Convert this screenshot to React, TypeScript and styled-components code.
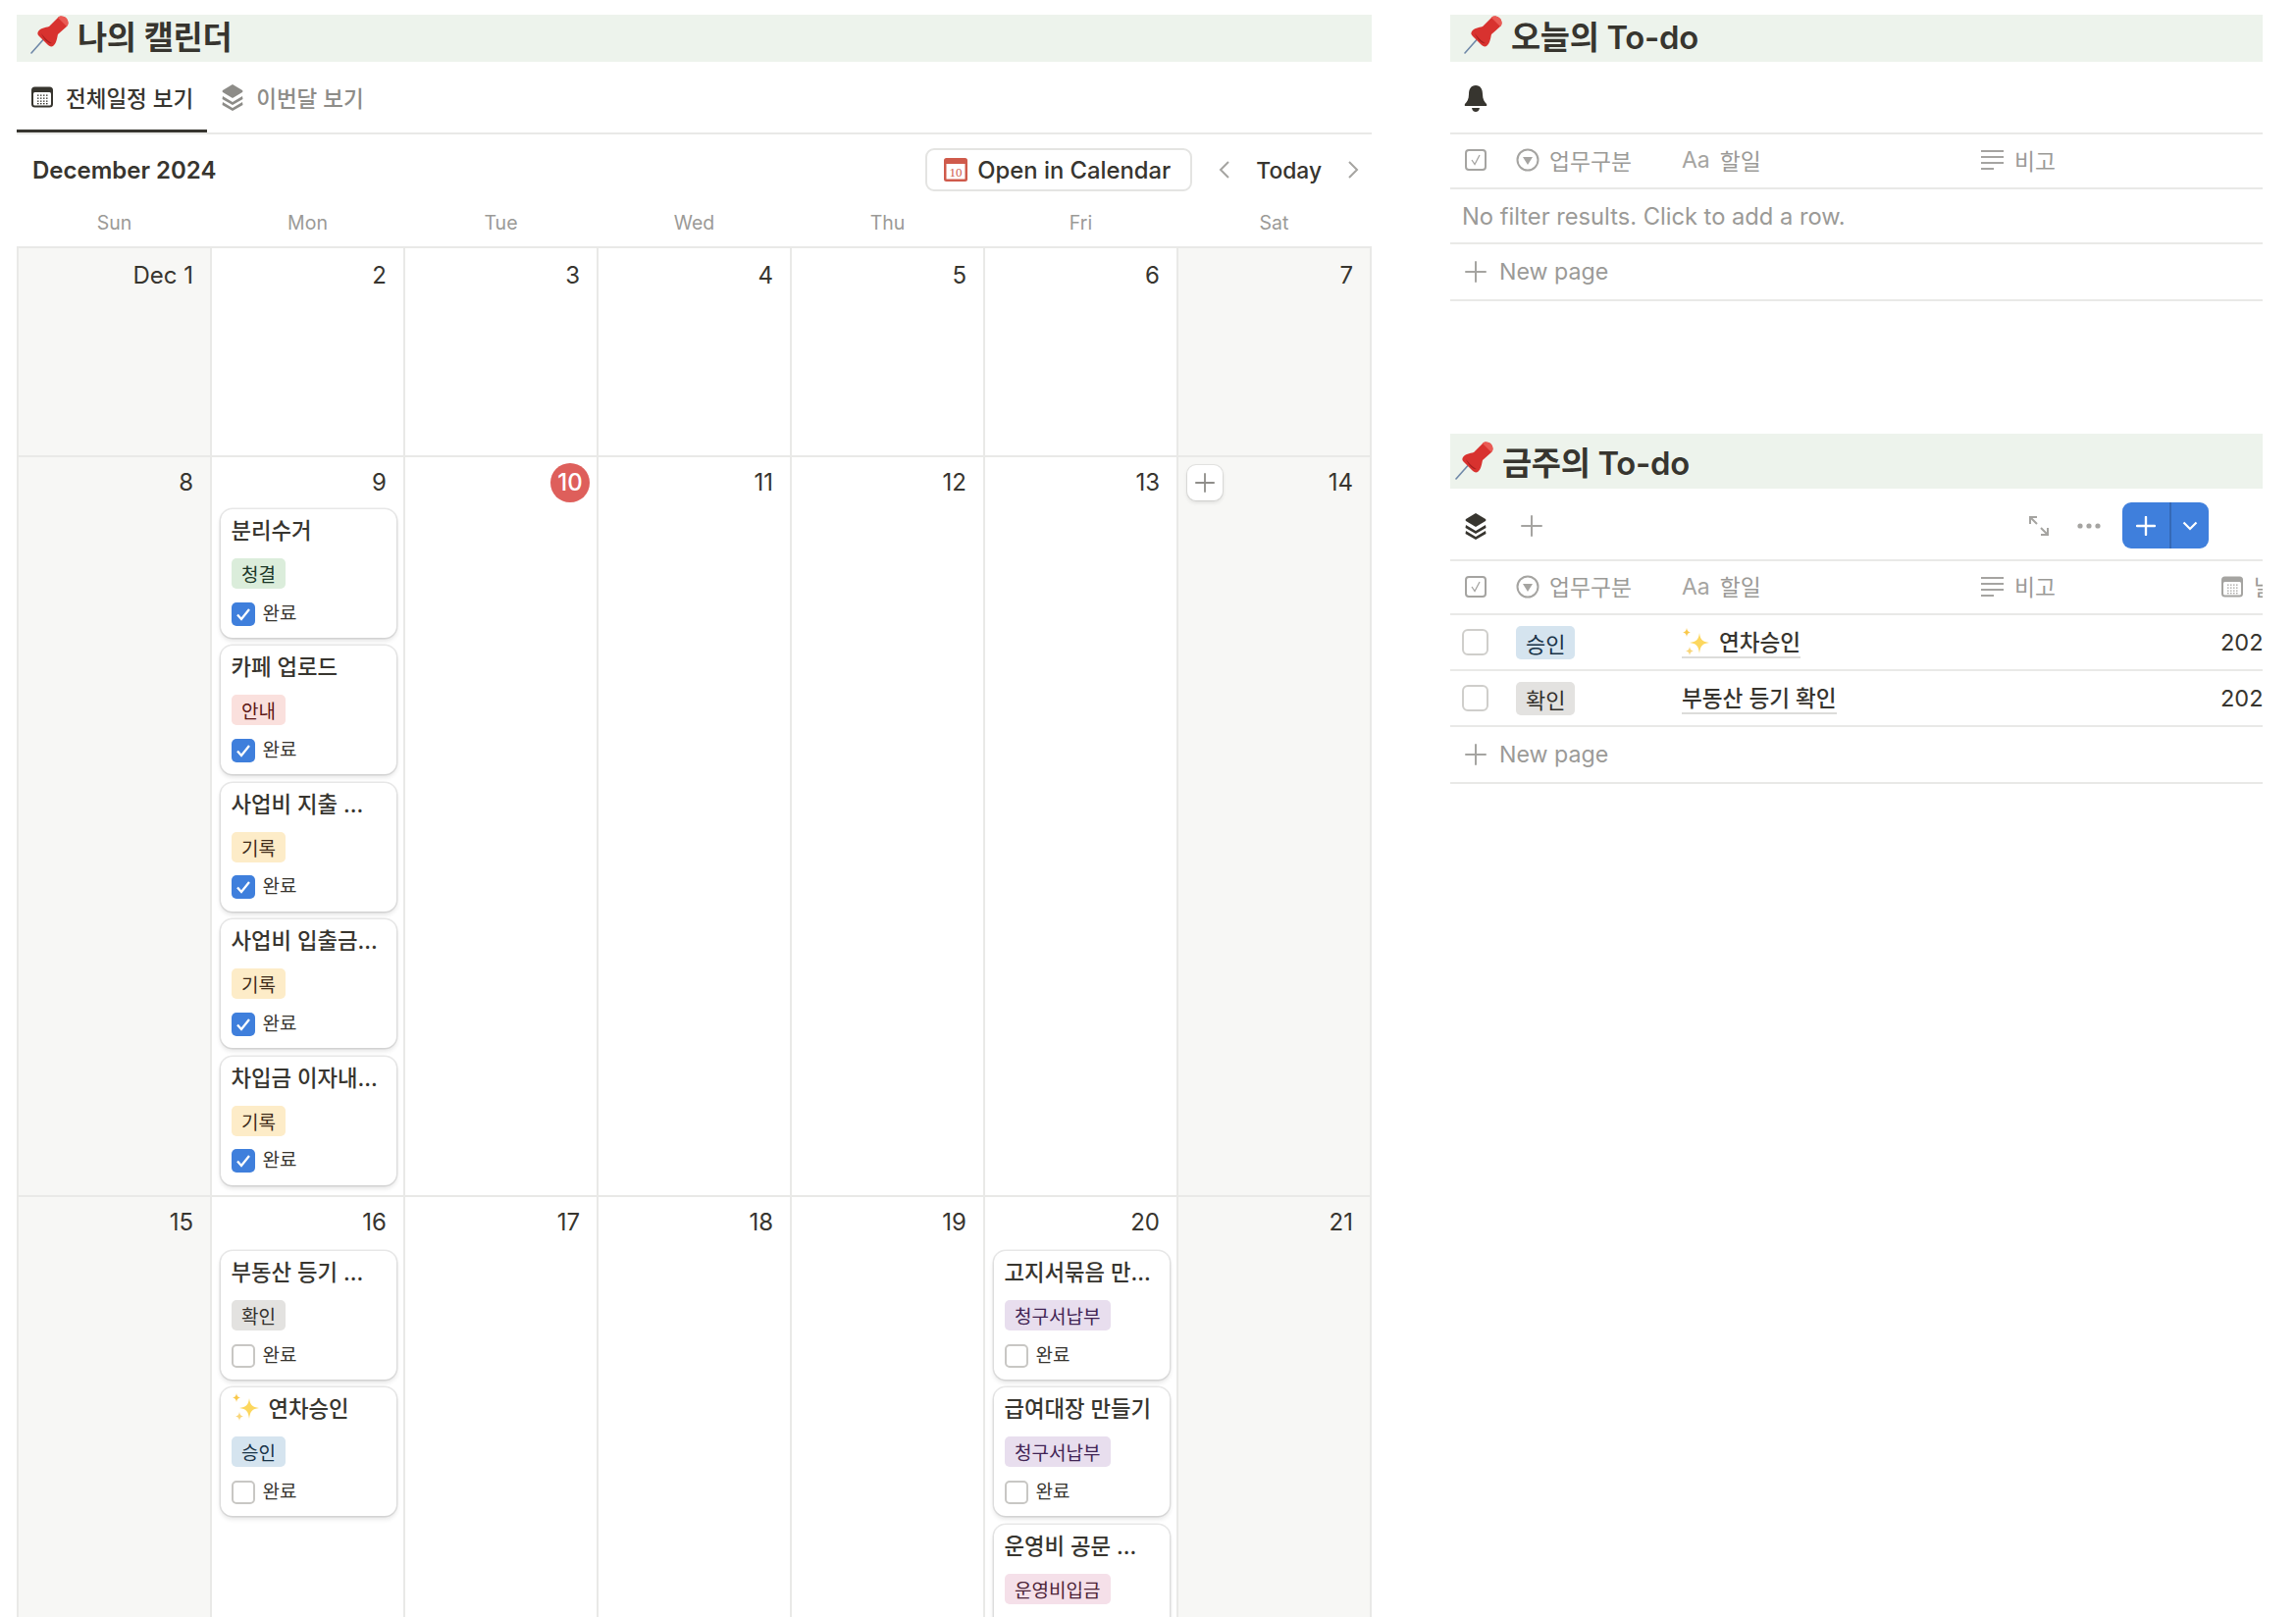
import React from "react";
import styled, { createGlobalStyle } from "styled-components";

const GlobalStyle = createGlobalStyle`
  html, body {
    margin: 0;
    padding: 0;
    background: #fff;
    color: #37352f;
    font-family: Inter, "Noto Sans CJK KR", sans-serif;
    -webkit-font-smoothing: antialiased;
  }
  * {
    box-sizing: border-box;
  }
`;

const Page = styled.div`
  width: 2340px;
  height: 1648px;
  overflow: hidden;
  display: flex;
  gap: 80px;
  padding: 15px 0 0 17px;
`;

const LeftColumn = styled.section`
  width: 1381px;
  flex: none;
`;

const RightColumn = styled.section`
  width: 828px;
  flex: none;
`;

const Heading = styled.h2<{ $height?: number; $pinLeft?: number; $lift?: number }>`
  margin: 0;
  height: ${(p) => p.$height ?? 48}px;
  background: #edf3ec;
  display: flex;
  align-items: center;
  gap: 8px;
  padding-left: ${(p) => p.$pinLeft ?? 14}px;
  padding-bottom: ${(p) => p.$lift ?? 0}px;
  font-size: 32.8px;
  font-weight: 600;
  letter-spacing: -0.3px;
  color: #37352f;
`;

const Tabs = styled.div`
  height: 74px;
  display: flex;
  border-bottom: 2px solid #e9e9e7;
`;

const Tab = styled.div<{ $active?: boolean }>`
  height: 72px;
  display: flex;
  align-items: center;
  gap: 12px;
  padding: 2px 14px 0;
  font-size: 22.5px;
  font-weight: 500;
  color: ${(p) => (p.$active ? "#37352f" : "#8d8c88")};
  border-bottom: 3px solid ${(p) => (p.$active ? "#37352f" : "transparent")};
  margin-bottom: -1px;
`;

const MonthBar = styled.div`
  height: 68px;
  display: flex;
  align-items: center;
  padding: 4px 13px 0 16px;
`;

const MonthTitle = styled.div`
  font-size: 24px;
  font-weight: 600;
  flex: 1;
`;

const OpenButton = styled.div`
  height: 44px;
  width: 272px;
  display: flex;
  align-items: center;
  gap: 10px;
  padding-left: 17px;
  border: 2px solid #e4e4e2;
  border-radius: 9px;
  font-size: 23.8px;
  font-weight: 500;
`;

const TodayNav = styled.div`
  display: flex;
  align-items: center;
  margin-left: 27px;
  font-size: 22.8px;
  font-weight: 500;
  gap: 26px;
`;

const WeekHeader = styled.div`
  height: 46px;
  margin-left: 1px;
  padding-bottom: 3px;
  display: grid;
  grid-template-columns: repeat(7, 197px);
`;

const WeekDay = styled.div`
  display: flex;
  align-items: center;
  justify-content: center;
  font-size: 19.5px;
  color: #9b9a97;
`;

const WeekRow = styled.div<{ $height: number }>`
  height: ${(p) => p.$height}px;
  width: 1381px;
  display: grid;
  grid-template-columns: repeat(7, 197px);
  border-top: 2px solid #e9e9e7;
`;

const DayCell = styled.div<{ $weekend?: boolean; $last?: boolean; $top: number }>`
  position: relative;
  height: 100%;
  padding: ${(p) => p.$top}px 6px 0 9px;
  background: ${(p) => (p.$weekend ? "#f7f7f5" : "#fff")};
  border-left: 2px solid #e9e9e7;
  box-shadow: ${(p) => (p.$last ? "2px 0 0 #e9e9e7" : "none")};
  overflow: hidden;
`;

const DayNumber = styled.div<{ $today?: boolean; $top: number }>`
  position: absolute;
  top: ${(p) => p.$top}px;
  right: ${(p) => (p.$today ? "7px" : "17px")};
  height: 40px;
  min-width: 40px;
  display: flex;
  align-items: center;
  justify-content: flex-end;
  font-size: 24px;
  color: #37352f;
  ${(p) =>
    p.$today &&
    `
    justify-content: center;
    border-radius: 50%;
    background: #de5f5b;
    color: #fff;
    font-weight: 500;
  `}
`;

const HoverAdd = styled.div`
  position: absolute;
  left: 9px;
  top: 8px;
  width: 36px;
  height: 36px;
  border-radius: 9px;
  background: #fff;
  box-shadow: 0 0 0 1px rgba(15, 15, 15, 0.08), 0 2px 4px rgba(15, 15, 15, 0.12);
  display: flex;
  align-items: center;
  justify-content: center;
`;

const Card = styled.div`
  width: 179px;
  height: 131px;
  margin-bottom: 8.4px;
  padding: 0 10.5px;
  background: #fff;
  border-radius: 12px;
  box-shadow: 0 0 0 1.5px rgba(15, 15, 15, 0.09), 0 3px 5px rgba(15, 15, 15, 0.12);
  display: flex;
  flex-direction: column;
  align-items: flex-start;
`;

const CardTitle = styled.div`
  height: 40px;
  display: flex;
  align-items: center;
  gap: 8px;
  font-size: 22.3px;
  font-weight: 500;
  white-space: nowrap;
  color: #37352f;
`;

const Tag = styled.span<{ $bg: string; $fg: string }>`
  display: inline-flex;
  align-items: center;
  height: 31px;
  margin-top: 10px;
  padding: 0 10.5px;
  border-radius: 5px;
  background: ${(p) => p.$bg};
  color: ${(p) => p.$fg};
  font-size: 19px;
  white-space: nowrap;
`;

const DoneRow = styled.div`
  display: flex;
  align-items: center;
  gap: 8px;
  margin-top: 13.5px;
  font-size: 19px;
  line-height: 24px;
  color: #37352f;
`;

const Check = styled.span<{ $checked?: boolean }>`
  width: 24px;
  height: 24px;
  flex: none;
  border-radius: 5px;
  background: ${(p) => (p.$checked ? "#3f7fdc" : "#fff")};
  border: ${(p) => (p.$checked ? "none" : "2px solid #c8c7c4")};
  display: flex;
  align-items: center;
  justify-content: center;
`;

const Toolbar = styled.div<{ $height: number }>`
  height: ${(p) => p.$height}px;
  display: flex;
  align-items: center;
  padding: 3px 0 0 14px;
  border-bottom: 2px solid #e9e9e7;
`;

const ToolbarRight = styled.div`
  margin-left: auto;
  margin-right: 55px;
  display: flex;
  align-items: center;
`;

const ToolbarSpacer = styled.span<{ $width: number }>`
  width: ${(p) => p.$width}px;
`;

const SplitButton = styled.div`
  width: 88px;
  height: 47px;
  margin-left: 22px;
  border-radius: 9px;
  background: #3f7fdc;
  display: grid;
  grid-template-columns: 48px 40px;
`;

const SplitPart = styled.div<{ $divided?: boolean }>`
  display: flex;
  align-items: center;
  justify-content: center;
  border-left: ${(p) => (p.$divided ? "2px solid #3569b6" : "none")};
`;

const TableClip = styled.div`
  width: 828px;
  overflow: hidden;
`;

const TableRow = styled.div<{ $height?: number }>`
  height: ${(p) => p.$height ?? 57}px;
  width: 1000px;
  display: grid;
  grid-template-columns: 56px 180px 304px 245px 215px;
  align-items: center;
  border-bottom: 2px solid #e9e9e7;
`;

const FullRow = styled.div<{ $height?: number; $pad: number; $size: number }>`
  height: ${(p) => p.$height ?? 56}px;
  width: 828px;
  display: flex;
  align-items: center;
  gap: 13px;
  border-bottom: 2px solid #e9e9e7;
  padding-left: ${(p) => p.$pad}px;
  font-size: ${(p) => p.$size}px;
  color: #9b9a97;
`;

const HeadCell = styled.div<{ $pad?: number }>`
  display: flex;
  align-items: center;
  gap: 10px;
  padding: 0 0 2px ${(p) => p.$pad ?? 0}px;
  font-size: 22.8px;
  color: #9b9a97;
  white-space: nowrap;
`;

const BodyCell = styled.div<{ $pad?: number }>`
  display: flex;
  align-items: center;
  padding-left: ${(p) => p.$pad ?? 0}px;
  font-size: 23.5px;
  color: #37352f;
  white-space: nowrap;
`;

const RowCheck = styled.span`
  width: 27px;
  height: 27px;
  margin-left: 12px;
  border: 2px solid #cfcecb;
  border-radius: 6px;
`;

const RowTag = styled.span<{ $bg: string; $fg: string }>`
  height: 34px;
  padding: 0 10px;
  display: inline-flex;
  align-items: center;
  border-radius: 5px;
  background: ${(p) => p.$bg};
  color: ${(p) => p.$fg};
  font-size: 22px;
`;

const RowTitle = styled.span`
  display: inline-flex;
  align-items: center;
  gap: 8px;
  height: 33px;
  font-size: 22.6px;
  font-weight: 500;
  border-bottom: 2px solid #dcdcda;
  white-space: nowrap;
`;

const SectionGap = styled.div`
  height: 135px;
`;

const Pin = () => (
  <svg width="40" height="40" viewBox="0 0 40 40">
    <path d="M1 39 L17 21" stroke="#6f88a8" strokeWidth="1.6" strokeLinecap="round" />
    <path
      d="M8 17 C10 14 15 13 19 12 L28 3 C30 1 34 1 37 4 C39 7 39 10 37 12 L28 20 C27 25 26 30 23 32 C21 33 19 32 17 30 L9 22 C7 20 7 19 8 17 Z"
      fill="#d8322f"
    />
    <path d="M28 3 C30 1 34 1 37 4 C39 7 39 10 37 12 L33 8 Z" fill="#ea5a54" />
    <path d="M11 19 C14 23 19 28 22 29 C19 30 14 26 11 19 Z" fill="#a71f1f" />
  </svg>
);

const Sparkle = ({ size = 30 }: { size?: number }) => (
  <svg width={size} height={size} viewBox="0 0 30 30">
    <path d="M18 6 C19 13 21 15 28 16 C21 17 19 19 18 27 C17 19 15 17 8 16 C15 15 17 13 18 6 Z" fill="#fcd75e" />
    <path d="M5 1 C5.5 4 6.5 5 9 5.5 C6.5 6 5.5 7 5 10 C4.5 7 3.5 6 1 5.5 C3.5 5 4.5 4 5 1 Z" fill="#f9c84a" />
    <path d="M8 20 C8.5 23 9.5 24 12 24.5 C9.5 25 8.5 26 8 29 C7.5 26 6.5 25 4 24.5 C6.5 24 7.5 23 8 20 Z" fill="#f9d67a" />
  </svg>
);

const CalendarIcon = ({ color = "#37352f", size = 24 }: { color?: string; size?: number }) => (
  <svg width={size} height={size} viewBox="0 0 24 24">
    <rect x="1" y="1.5" width="22" height="21" rx="3.5" fill={color} />
    <rect x="3" y="7" width="18" height="13.5" rx="1.5" fill="#fff" />
    {[9.5, 12.5, 15.5, 18].map((y) =>
      [7, 10, 13, 16].map((x) => <rect key={`${x}-${y}`} x={x} y={y} width="1.5" height="1.3" fill={color} />)
    )}
  </svg>
);

const LayersIcon = ({ color = "#37352f" }: { color?: string }) => (
  <svg width="24" height="28" viewBox="0 0 24 28">
    <path d="M12 1 L22 7 Q23 8 22 9 L12 15 L2 9 Q1 8 2 7 Z" fill={color} />
    <path d="M2 13 L12 19 L22 13 L22.5 16 L12 22 L1.5 16 Z" fill={color} />
    <path d="M2 19 L12 25 L22 19 L22.5 22 L12 28 L1.5 22 Z" fill={color} />
  </svg>
);

const BellIcon = () => (
  <svg width="24" height="27" viewBox="0 0 24 27">
    <path
      d="M12 0 C7 0 5 4 5 9 C5 14 3 17 1 19 Q0 21 2 21 L22 21 Q24 21 23 19 C21 17 19 14 19 9 C19 4 17 0 12 0 Z"
      fill="#37352f"
    />
    <path d="M8 23 L16 23 C15.5 26 13.5 27 12 27 C10.5 27 8.5 26 8 23 Z" fill="#37352f" />
  </svg>
);

const PlusIcon = ({ size = 22, color = "#a5a4a1", width = 2 }: { size?: number; color?: string; width?: number }) => (
  <svg width={size} height={size} viewBox="0 0 22 22">
    <path d="M11 1 V21 M1 11 H21" stroke={color} strokeWidth={width} strokeLinecap="round" />
  </svg>
);

const CheckboxIcon = () => (
  <svg width="22" height="22" viewBox="0 0 22 22" fill="none">
    <rect x="1" y="1" width="20" height="20" rx="3" stroke="#a5a4a1" strokeWidth="2" />
    <path d="M7 11 L10 15.5 L15 6" stroke="#a5a4a1" strokeWidth="1.3" />
  </svg>
);

const SelectIcon = () => (
  <svg width="24" height="24" viewBox="0 0 24 24" fill="none">
    <circle cx="12" cy="12" r="10.5" stroke="#a5a4a1" strokeWidth="2" />
    <path d="M7 9 H17 L12 17 Z" fill="#a5a4a1" />
  </svg>
);

const LinesIcon = () => (
  <svg width="25" height="22" viewBox="0 0 25 22">
    <path d="M1 2 H24 M1 8 H24 M1 14 H24 M1 20 H14" stroke="#a5a4a1" strokeWidth="2" />
  </svg>
);

const TextPropIcon = styled.span`
  font-size: 23px;
  color: #a5a4a1;
`;

const ExpandIcon = () => (
  <svg width="22" height="22" viewBox="0 0 22 22" fill="none" stroke="#a5a4a1" strokeWidth="2">
    <path d="M2 9 V2 H9 M2 2 L9 9 M20 13 V20 H13 M20 20 L13 13" />
  </svg>
);

const DotsIcon = () => (
  <svg width="24" height="6" viewBox="0 0 24 6" fill="#a5a4a1">
    <circle cx="3" cy="3" r="2.6" />
    <circle cx="12" cy="3" r="2.6" />
    <circle cx="21" cy="3" r="2.6" />
  </svg>
);

const Chevron = ({ dir }: { dir: "left" | "right" }) => (
  <svg width="12" height="20" viewBox="0 0 12 20" fill="none" stroke="#a5a4a1" strokeWidth="2">
    <path d={dir === "left" ? "M10 2 L2 10 L10 18" : "M2 2 L10 10 L2 18"} />
  </svg>
);

const CalendarAppIcon = () => (
  <svg width="24" height="24" viewBox="0 0 24 24">
    <rect width="24" height="24" rx="2.5" fill="#cf5a4b" />
    <rect x="2.5" y="6" width="19" height="15.5" fill="#fff" />
    <text x="12" y="18.5" textAnchor="middle" fontSize="13" fontFamily="Liberation Serif, serif" fill="#cf5a4b">
      10
    </text>
  </svg>
);

const TickIcon = () => (
  <svg width="16" height="16" viewBox="0 0 16 16" fill="none">
    <path d="M2 8.5 L6 13 L14 3" stroke="#fff" strokeWidth="2.3" />
  </svg>
);

type TTagName = "청결" | "안내" | "기록" | "확인" | "승인" | "청구서납부" | "운영비입금";

const TAG_COLORS: Record<TTagName, { bg: string; fg: string }> = {
  청결: { bg: "#dbeddb", fg: "#1c3829" },
  안내: { bg: "#fae0dd", fg: "#5d1715" },
  기록: { bg: "#fdecc8", fg: "#402c1b" },
  확인: { bg: "#e3e2e0", fg: "#32302c" },
  승인: { bg: "#d5e4ef", fg: "#183347" },
  청구서납부: { bg: "#e8deee", fg: "#412454" },
  운영비입금: { bg: "#f5e0e9", fg: "#4c2337" },
};

type TEvent = {
  title: string;
  tag: TTagName;
  done?: boolean;
  sparkle?: boolean;
};

type TDay = {
  label: string;
  today?: boolean;
  add?: boolean;
  events?: TEvent[];
};

const WEEK_DAYS = ["Sun", "Mon", "Tue", "Wed", "Thu", "Fri", "Sat"];

const plain = (labels: string[]): TDay[] => labels.map((label) => ({ label }));

const WEEKS: { height: number; top: number; numberTop: number; days: TDay[] }[] = [
  { height: 213, top: 54, numberTop: 7, days: plain(["Dec 1", "2", "3", "4", "5", "6", "7"]) },
  {
    height: 754,
    top: 53,
    numberTop: 5.5,
    days: [
      { label: "8" },
      {
        label: "9",
        events: [
          { title: "분리수거", tag: "청결", done: true },
          { title: "카페 업로드", tag: "안내", done: true },
          { title: "사업비 지출 ...", tag: "기록", done: true },
          { title: "사업비 입출금...", tag: "기록", done: true },
          { title: "차입금 이자내...", tag: "기록", done: true },
        ],
      },
      { label: "10", today: true },
      { label: "11" },
      { label: "12" },
      { label: "13" },
      { label: "14", add: true },
    ],
  },
  {
    height: 440,
    top: 55,
    numberTop: 5.5,
    days: [
      { label: "15" },
      {
        label: "16",
        events: [
          { title: "부동산 등기 ...", tag: "확인" },
          { title: "연차승인", tag: "승인", sparkle: true },
        ],
      },
      { label: "17" },
      { label: "18" },
      { label: "19" },
      {
        label: "20",
        events: [
          { title: "고지서묶음 만...", tag: "청구서납부" },
          { title: "급여대장 만들기", tag: "청구서납부" },
          { title: "운영비 공문 ...", tag: "운영비입금" },
        ],
      },
      { label: "21" },
    ],
  },
];

const EventCard = ({ event }: { event: TEvent }) => {
  const colors = TAG_COLORS[event.tag];
  return (
    <Card>
      <CardTitle>
        {event.sparkle && <Sparkle />}
        {event.title}
      </CardTitle>
      <Tag $bg={colors.bg} $fg={colors.fg}>
        {event.tag}
      </Tag>
      <DoneRow>
        <Check $checked={event.done}>{event.done && <TickIcon />}</Check>
        완료
      </DoneRow>
    </Card>
  );
};

const TableHeader = ({ withDate, height }: { withDate?: boolean; height: number }) => (
  <TableRow $height={height}>
    <HeadCell $pad={15}>
      <CheckboxIcon />
    </HeadCell>
    <HeadCell $pad={11}>
      <SelectIcon />
      업무구분
    </HeadCell>
    <HeadCell $pad={0}>
      <TextPropIcon>Aa</TextPropIcon>
      할일
    </HeadCell>
    <HeadCell $pad={0}>
      <LinesIcon />
      비고
    </HeadCell>
    {withDate && (
      <HeadCell $pad={0}>
        <CalendarIcon color="#a5a4a1" />
        날짜
      </HeadCell>
    )}
  </TableRow>
);

const NewPage = () => (
  <FullRow $height={58} $pad={15} $size={23.2}>
    <PlusIcon />
    New page
  </FullRow>
);

const App = () => {
  return (
    <>
      <GlobalStyle />
      <Page>
        <LeftColumn>
          <Heading $lift={8}>
            <Pin />
            나의 캘린더
          </Heading>
          <Tabs>
            <Tab $active>
              <CalendarIcon />
              전체일정 보기
            </Tab>
            <Tab>
              <LayersIcon color="#8d8c88" />
              이번달 보기
            </Tab>
          </Tabs>
          <MonthBar>
            <MonthTitle>December 2024</MonthTitle>
            <OpenButton>
              <CalendarAppIcon />
              Open in Calendar
            </OpenButton>
            <TodayNav>
              <Chevron dir="left" />
              Today
              <Chevron dir="right" />
            </TodayNav>
          </MonthBar>
          <WeekHeader>
            {WEEK_DAYS.map((day) => (
              <WeekDay key={day}>{day}</WeekDay>
            ))}
          </WeekHeader>
          {WEEKS.map((week) => (
            <WeekRow key={week.days[0].label} $height={week.height}>
              {week.days.map((day, index) => (
                <DayCell
                  key={day.label}
                  $weekend={index === 0 || index === 6}
                  $last={index === 6}
                  $top={week.top}
                >
                  {day.add && (
                    <HoverAdd>
                      <PlusIcon size={20} color="#8f8e8a" />
                    </HoverAdd>
                  )}
                  <DayNumber $today={day.today} $top={week.numberTop}>
                    {day.label}
                  </DayNumber>
                  {day.events?.map((event) => (
                    <EventCard key={event.title} event={event} />
                  ))}
                </DayCell>
              ))}
            </WeekRow>
          ))}
        </LeftColumn>

        <RightColumn>
          <Heading $lift={8}>
            <Pin />
            오늘의 To-do
          </Heading>
          <Toolbar $height={74}>
            <BellIcon />
          </Toolbar>
          <TableClip>
            <TableHeader height={56} />
            <FullRow $pad={12} $size={23.7}>
              No filter results. Click to add a row.
            </FullRow>
            <NewPage />
          </TableClip>

          <SectionGap />

          <Heading $height={56} $pinLeft={5} $lift={2}>
            <Pin />
            금주의 To-do
          </Heading>
          <Toolbar $height={74}>
            <LayersIcon />
            <ToolbarSpacer $width={34} />
            <PlusIcon />
            <ToolbarRight>
              <ExpandIcon />
              <ToolbarSpacer $width={28} />
              <DotsIcon />
              <SplitButton>
                <SplitPart>
                  <PlusIcon size={20} color="#fff" width={2.6} />
                </SplitPart>
                <SplitPart $divided>
                  <svg width="16" height="10" viewBox="0 0 16 10" fill="none" stroke="#fff" strokeWidth="2.2">
                    <path d="M1.5 1.5 L8 8 L14.5 1.5" />
                  </svg>
                </SplitPart>
              </SplitButton>
            </ToolbarRight>
          </Toolbar>
          <TableClip>
            <TableHeader height={55} withDate />
            <TableRow>
              <BodyCell>
                <RowCheck />
              </BodyCell>
              <BodyCell $pad={11}>
                <RowTag $bg={TAG_COLORS["승인"].bg} $fg={TAG_COLORS["승인"].fg}>
                  승인
                </RowTag>
              </BodyCell>
              <BodyCell>
                <RowTitle>
                  <Sparkle />
                  연차승인
                </RowTitle>
              </BodyCell>
              <BodyCell />
              <BodyCell>2024/12/16</BodyCell>
            </TableRow>
            <TableRow>
              <BodyCell>
                <RowCheck />
              </BodyCell>
              <BodyCell $pad={11}>
                <RowTag $bg={TAG_COLORS["확인"].bg} $fg={TAG_COLORS["확인"].fg}>
                  확인
                </RowTag>
              </BodyCell>
              <BodyCell>
                <RowTitle>부동산 등기 확인</RowTitle>
              </BodyCell>
              <BodyCell />
              <BodyCell>2024/12/16</BodyCell>
            </TableRow>
            <NewPage />
          </TableClip>
        </RightColumn>
      </Page>
    </>
  );
};

export default App;
